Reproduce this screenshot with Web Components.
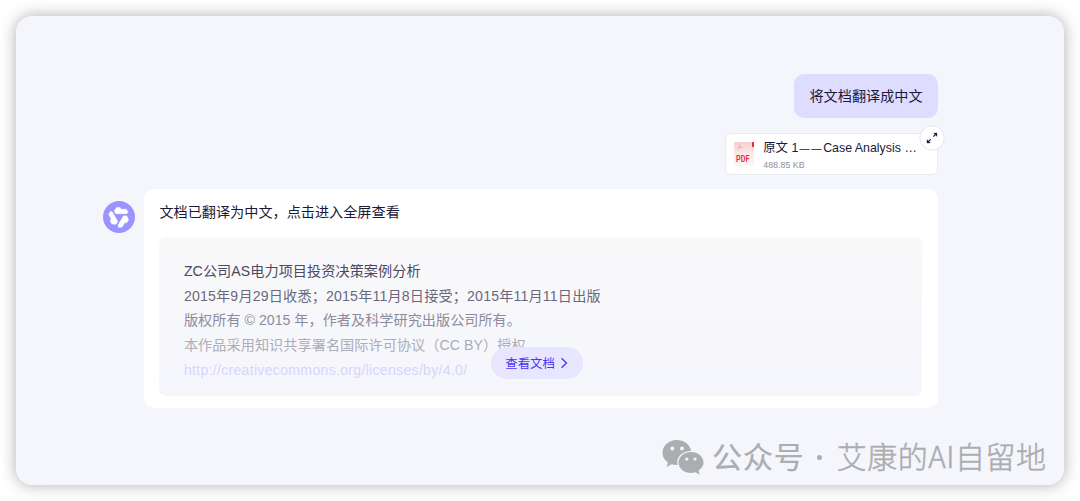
<!DOCTYPE html>
<html lang="zh-CN">
<head>
<meta charset="utf-8">
<title>文档翻译</title>
<style>
  body {
    margin: 0;
    width: 1080px;
    height: 501px;
    overflow: hidden;
    background: #fff;
    color: #1c1839;
    font-family: "Liberation Sans", "Noto Sans CJK SC", sans-serif;
    font-size: 14.15px;
  }
</style>
</head>
<body>
<chat-window>
  <user-message>将文档翻译成中文</user-message>
  <file-card size="488.85 KB">原文 1<span>——</span>Case Analysis …</file-card>
  <bot-reply>
    <span slot="title">文档已翻译为中文，点击进入全屏查看</span>
    <doc-preview>
      <doc-line tone="#4b485f" spacing="0.06">ZC公司AS电力项目投资决策案例分析</doc-line>
      <doc-line tone="#6b687d" spacing="0.17">2015年9月29日收悉；2015年11月8日接受；2015年11月11日出版</doc-line>
      <doc-line tone="#8d8b9b" spacing="0.02">版权所有 © 2015 年，作者及科学研究出版公司所有。</doc-line>
      <doc-line tone="#adacb8" spacing="0.06">本作品采用知识共享署名国际许可协议（CC BY）授权</doc-line>
      <doc-line tone="#d9d4fb" spacing="0.27">http://creativecommons.org/licenses/by/4.0/</doc-line>
      <view-button slot="action">查看文档</view-button>
    </doc-preview>
  </bot-reply>
  <account-mark slot="mark" name="艾康的AI自留地">公众号</account-mark>
</chat-window>

<script>
const define = (name, html, setup) => {
  const template = document.createElement("template");
  template.innerHTML = html;
  customElements.define(
    name,
    class extends HTMLElement {
      constructor() {
        super();
        this.attachShadow({ mode: "open" });
        this.shadowRoot.appendChild(template.content.cloneNode(true));
        if (setup) setup(this, this.shadowRoot);
      }
    }
  );
};

define("chat-window", `
<style>
  :host {
    display: block;
    padding: 16px;
  }
  .panel {
    box-sizing: border-box;
    width: 1048px;
    height: 469px;
    padding: 58.4px 126.4px 0 86.6px;
    border-radius: 16px;
    background: #f5f6fc;
    box-shadow: 0 0 16px rgba(0, 0, 0, 0.32);
  }
  .thread {
    display: flex;
    flex-direction: column;
    align-items: flex-end;
  }
  ::slotted(account-mark) {
    position: absolute;
    left: 662px;
    top: 432px;
  }
</style>
<div class="panel">
  <div class="thread"><slot></slot></div>
  <slot name="mark"></slot>
</div>
`);

define("user-message", `
<style>
  :host {
    display: block;
    box-sizing: border-box;
    height: 44px;
    margin-bottom: 14.6px;
    padding: 0 15px;
    border-radius: 10px;
    background: #dedcff;
    line-height: 44px;
    white-space: nowrap;
  }
</style>
<slot></slot>
`);

define("file-card", `
<style>
  :host {
    display: flex;
    position: relative;
    box-sizing: border-box;
    width: 212.4px;
    height: 42px;
    margin-bottom: 14px;
    padding-left: 8px;
    border: 1px solid #ebecf2;
    border-radius: 6px;
    background: #fff;
    white-space: nowrap;
  }
  .pdf {
    width: 20px;
    height: 24px;
    margin: 8px 9px 0 0;
  }
  .name {
    margin-top: 5px;
    font-size: 12.4px;
    line-height: 19px;
  }
  ::slotted(span) {
    margin-left: 1px;
    font-size: 10.4px;
    letter-spacing: 1.5px;
  }
  .size {
    margin-top: 1px;
    color: #92909f;
    font-size: 8.9px;
    line-height: 13px;
  }
  .expand {
    position: absolute;
    right: -8px;
    top: -9px;
    width: 26px;
    height: 26px;
  }
</style>
<svg class="pdf" viewBox="0 0 20 24">
  <defs>
    <linearGradient id="paper" x1="0" y1="0" x2="0" y2="1">
      <stop offset="0" stop-color="#fbcfcf"/>
      <stop offset=".55" stop-color="#fdeaea"/>
      <stop offset="1" stop-color="#fdf7f7"/>
    </linearGradient>
  </defs>
  <rect width="20" height="24" rx="1" fill="url(#paper)"/>
  <path d="M18 0h1.2q.8 0 .8.8V5h-2z" fill="#dc3038"/>
  <path d="M5.2 2.2c.6 2.2 1.3 3 3.3 3.7M5.6 3.5C5.3 5 4.4 6.2 2.8 7.2M3.8 6.1c1.4-.6 2.7-.8 4.5-.5" fill="none" stroke="#f19a9c" stroke-width=".7"/>
  <text x="2" y="20" textLength="13.5" lengthAdjust="spacingAndGlyphs" fill="#e23940" font-family="Roboto, sans-serif" font-size="8.5" font-weight="700">PDF</text>
</svg>
<div>
  <div class="name"><slot></slot></div>
  <div class="size"></div>
</div>
<svg class="expand" viewBox="0 0 26 26">
  <circle cx="13" cy="13" r="12.2" fill="#fff" stroke="#e6e6ed"/>
  <path d="M14.3 11.7L17 9M11.7 14.3L9 17" fill="none" stroke="#1c1839" stroke-width="1.1"/>
  <path d="M14.6 8H18v3.4L16.9 10.3V9.1H15.7zM8 14.6V18h3.4L10.3 16.9H9.1V15.7z" fill="#1c1839" stroke="#1c1839" stroke-width=".3"/>
</svg>
`, (host, root) => {
  root.querySelector(".size").textContent = host.getAttribute("size");
});

define("bot-reply", `
<style>
  :host {
    display: flex;
    width: 835px;
    justify-content: space-between;
  }
  .avatar {
    width: 32px;
    height: 32px;
    margin-top: 12px;
  }
  .card {
    box-sizing: border-box;
    width: 793.6px;
    height: 219px;
    padding: 0 15.4px;
    border-radius: 10px;
    background: #fff;
  }
  .title {
    height: 48px;
    line-height: 46px;
  }
</style>
<svg class="avatar" viewBox="0 0 32 32">
  <circle cx="16" cy="16" r="16" fill="#9b93ff"/>
  <g fill="#fff" stroke="#fff" stroke-width=".5" stroke-linejoin="round">
    <path d="M11.2 9.8L13.6 6.400H17L18.200 8.300H23.200L25.200 11.200L23.700 12.700H12.800Z"/>
    <path d="M11.2 9.8L13.6 6.400H17L18.200 8.300H23.200L25.200 11.200L23.700 12.700H12.800Z" transform="rotate(120 16 16)"/>
    <path d="M11.2 9.8L13.6 6.400H17L18.200 8.300H23.200L25.200 11.200L23.700 12.700H12.800Z" transform="rotate(240 16 16)"/>
  </g>
</svg>
<div class="card">
  <div class="title"><slot name="title"></slot></div>
  <slot></slot>
</div>
`);

define("doc-preview", `
<style>
  :host {
    display: block;
    position: relative;
    box-sizing: border-box;
    height: 159px;
    padding: 22px 24.5px 0;
    border-radius: 7px;
    background: linear-gradient(#f9f9fa, #f5f6fc);
  }
  ::slotted(view-button) {
    position: absolute;
    left: 331.4px;
    top: 110px;
  }
</style>
<slot></slot>
<slot name="action"></slot>
`);

define("doc-line", `
<style>
  :host {
    display: block;
    height: 24.75px;
    line-height: 24.75px;
    white-space: nowrap;
  }
</style>
<slot></slot>
`, (host) => {
  host.style.color = host.getAttribute("tone");
  host.style.letterSpacing = host.getAttribute("spacing") + "px";
});

define("view-button", `
<style>
  :host {
    display: flex;
    box-sizing: border-box;
    width: 92.4px;
    height: 32px;
    padding-left: 14.5px;
    align-items: center;
    gap: 5px;
    border-radius: 16px;
    background: #e8e5ff;
    color: #4a35f6;
    font-size: 12.4px;
    white-space: nowrap;
  }
</style>
<slot></slot>
<svg width="8" height="12" viewBox="0 0 8 12">
  <path d="M1.5 1.2L6.5 6L1.5 10.8" fill="none" stroke="#4a35f6" stroke-width="1.3"/>
</svg>
`);

define("account-mark", `
<style>
  :host {
    display: flex;
    height: 46px;
    align-items: center;
    color: #acadb0;
    font-family: "Noto Sans CJK SC", sans-serif;
    font-size: 30px;
    white-space: nowrap;
  }
  svg {
    width: 42px;
    height: 36px;
    margin: 4px 8px 0 0;
  }
  .kind {
    letter-spacing: 0.9px;
    -webkit-text-stroke: 0.2px #acadb0;
  }
  .dot {
    width: 5px;
    height: 5px;
    margin: 5px 15px 0 12px;
    border-radius: 50%;
    background: #acadb0;
  }
  .name {
    font-weight: 300;
    letter-spacing: 0.5px;
    -webkit-text-stroke: 0.5px #acadb0;
  }
</style>
<svg viewBox="0 0 42 36">
  <path d="M15 1C6.8 1 .5 6.7.5 13.7c0 4 2 7.4 5.4 9.7L4.5 28l5.3-2.7c1.9.6 3.6.9 5.8.8C13.7 18 20.5 11.7 29.3 12 28 5.5 22 1 15 1z" fill="#acadb0"/>
  <path d="M29 13c-7 0-12.5 4.7-12.5 10.5S22 34 29 34c1.5 0 3-.2 4.3-.7l4.5 2.2-1.2-4c3-2 4.9-4.8 4.9-8C41.5 17.7 36 13 29 13z" fill="#acadb0"/>
  <g fill="#f5f6fc">
    <circle cx="10.3" cy="9.5" r="1.9"/>
    <circle cx="20" cy="9.5" r="1.9"/>
    <circle cx="24.8" cy="20" r="1.6"/>
    <circle cx="33" cy="20" r="1.6"/>
  </g>
</svg>
<span class="kind"><slot></slot></span>
<span class="dot"></span>
<span class="name"></span>
`, (host, root) => {
  root.querySelector(".name").textContent = host.getAttribute("name");
});
</script>
</body>
</html>
